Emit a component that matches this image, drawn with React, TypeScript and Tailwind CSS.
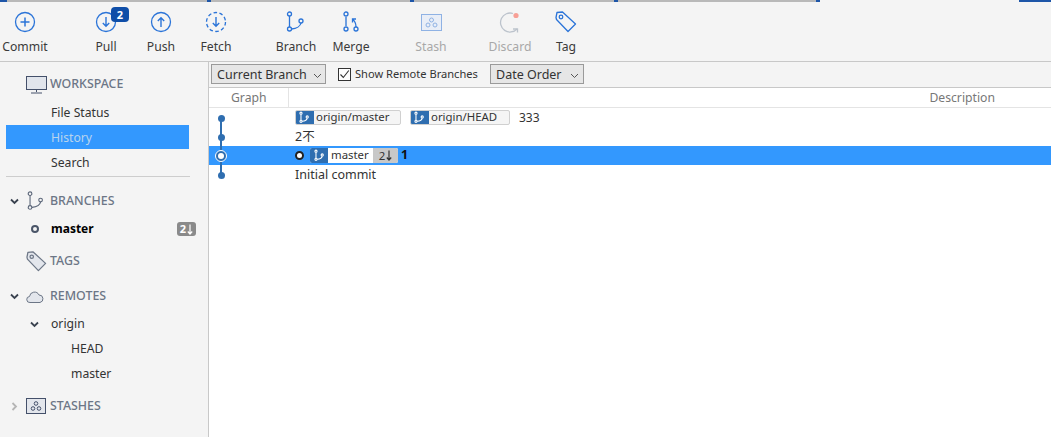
import React from "react";

const BLUE = "#2b74d8";

function CircleIcon({ kind }: { kind: "plus" | "down" | "up" | "fetch" }) {
  return (
    <svg width="22" height="22" viewBox="0 0 22 22" fill="none" stroke={BLUE} strokeWidth="1.3">
      <circle cx="11" cy="11" r="9.5" strokeDasharray={kind === "fetch" ? "3.6 2.4" : undefined} />
      {kind === "plus" && <path d="M11 6.5v9M6.5 11h9" strokeWidth="1.5" />}
      {(kind === "down" || kind === "fetch") && <path d="M11 6v9M7.8 12l3.2 3.2 3.2-3.2" strokeWidth="1.4" />}
      {kind === "up" && <path d="M11 16V7M7.8 10l3.2-3.2 3.2 3.2" strokeWidth="1.4" />}
    </svg>
  );
}

function BranchIcon({ color = BLUE, size = 24, sw = 1.3 }: { color?: string; size?: number; sw?: number }) {
  return (
    <svg width={size} height={size} viewBox="0 0 24 24" fill="none" stroke={color} strokeWidth={sw}>
      <circle cx="5.5" cy="4" r="2" />
      <circle cx="5.5" cy="19" r="2" />
      <circle cx="17" cy="11" r="2" />
      <path d="M5.5 6v11M7.5 19c5-.5 9-3 9.5-6" />
    </svg>
  );
}

function MergeIcon() {
  return (
    <svg width="24" height="24" viewBox="0 0 24 24" fill="none" stroke={BLUE} strokeWidth="1.3">
      <circle cx="7" cy="4" r="2" />
      <circle cx="7" cy="19" r="2" />
      <circle cx="17" cy="19" r="2" />
      <path d="M7 6v11" strokeWidth="2" stroke="#6f9fe0" />
      <path d="M17 17c0-4-1-6-3.5-7.5M13.5 12.5v-3.5h3.5" />
    </svg>
  );
}

function StashIcon() {
  return (
    <svg width="21" height="17" viewBox="0 0 21 17" fill="#e9eef7" stroke="#8fb2e4" strokeWidth="1">
      <rect x="0.5" y="0.5" width="20" height="16" />
      <circle cx="10.5" cy="6" r="2" />
      <circle cx="7" cy="11" r="2" />
      <circle cx="14" cy="11" r="2" />
    </svg>
  );
}

function DiscardIcon() {
  return (
    <svg width="22" height="22" viewBox="0 0 22 22" fill="none">
      <path d="M14 2.5A9.5 9.5 0 1 0 18 18" stroke="#bcc3cc" strokeWidth="1.3" />
      <path d="M14 18h4.5v3.5" stroke="#bcc3cc" strokeWidth="1.3" />
      <circle cx="17" cy="4.5" r="2.6" fill="#f79f95" />
    </svg>
  );
}

function TagIcon({ color = BLUE, fill = "none", size = 22 }: { color?: string; fill?: string; size?: number }) {
  return (
    <svg width={size} height={size} viewBox="0 0 22 22" fill={fill} stroke={color} strokeWidth="1.3">
      <path d="M1 6.5 2 1.5 7.5 1 20.5 13 13 20.5 1.5 8.5Z" strokeLinejoin="round" />
      <circle cx="6" cy="6" r="1.8" fill="none" />
    </svg>
  );
}

function DownArrow({ color }: { color: string }) {
  return (
    <svg width="6" height="11" viewBox="0 0 6 11" fill="none" stroke={color} strokeWidth="1.2">
      <path d="M3 0.5v9.5M0.8 7.5 3 10l2.2-2.5" />
    </svg>
  );
}

function ToolButton({
  label,
  width,
  muted,
  children,
}: {
  label: string;
  width: string;
  muted?: boolean;
  children: React.ReactNode;
}) {
  return (
    <div className={`relative flex flex-col items-center shrink-0 ${width}`}>
      <div className="h-[24px] flex items-center justify-center">{children}</div>
      <span className={`mt-[4px] whitespace-nowrap text-[12.2px] leading-[18px] ${muted ? "text-[#a8a8a8]" : "text-[#3a3a3a]"}`}>{label}</span>
    </div>
  );
}

function Caret() {
  return (
    <svg width="9" height="6" viewBox="0 0 9 6" fill="none" stroke="#555" strokeWidth="1">
      <path d="M1 1l3.5 3.5L8 1" />
    </svg>
  );
}

function Chevron({ right }: { right?: boolean }) {
  return (
    <svg width="9" height="9" viewBox="0 0 9 9" fill="none" stroke={right ? "#b5b5b5" : "#39424f"} strokeWidth="1.8">
      {right ? <path d="M2.5 1l3.5 3.5L2.5 8" /> : <path d="M1 2.5l3.5 3.5L8 2.5" />}
    </svg>
  );
}

function SectionTitle({ children }: { children: React.ReactNode }) {
  return <span className="text-[12.4px] font-medium text-[#6c7686]">{children}</span>;
}

function RefChip({ label, width }: { label: string; width: string }) {
  return (
    <span className={`flex items-stretch h-[15px] rounded-[2px] border border-[#d0d0d0] bg-[#f5f5f5] overflow-hidden ${width}`}>
      <span className="w-[19px] bg-[#2f6eb0] flex items-center justify-center shrink-0 -my-px -ml-px">
        <BranchIcon color="#ffffff" size={13} sw={2} />
      </span>
      <span className="pl-[2px] text-[11.4px] leading-[12px] text-[#333] whitespace-nowrap">{label}</span>
    </span>
  );
}

function GraphDot({ selected, up, down }: { selected?: boolean; up?: boolean; down?: boolean }) {
  return (
    <div className="relative w-[80px] h-[19px] shrink-0">
      {up && <div className="absolute left-[11px] top-0 h-[9px] w-[2px] bg-[#2f6eb0]" />}
      {down && <div className="absolute left-[11px] top-[10px] h-[9px] w-[2px] bg-[#2f6eb0]" />}
      {selected ? (
        <div className="absolute left-[6px] top-[4px] w-[12px] h-[12px] rounded-full border-[1.5px] border-white bg-[#2f6eb0] flex items-center justify-center">
          <div className="w-[6px] h-[6px] rounded-full bg-white" />
        </div>
      ) : (
        <div className="absolute left-[8.5px] top-[6.5px] w-[7px] h-[7px] rounded-full bg-[#2f6eb0]" />
      )}
    </div>
  );
}

export default function App() {
  return (
    <div
      className="w-[1051px] h-[437px] overflow-hidden bg-white flex flex-col text-[#333]"
      style={{ fontFamily: '"Noto Sans", "Noto Sans CJK SC", sans-serif' }}
    >
      <div className="h-[2px] shrink-0 bg-[#f4f4f4] flex">
        <div className="w-[820px] bg-[#b9b9b9] flex">
          <div className="w-[7px] bg-[#1e56a8]" />
          <div className="ml-[200px] w-[4px] bg-[#1e56a8]" />
          <div className="ml-[199px] w-[4px] bg-[#1e56a8]" />
          <div className="ml-[200px] w-[4px] bg-[#1e56a8]" />
          <div className="ml-[198px] w-[4px] bg-[#1e56a8]" />
        </div>
        <div className="ml-[199px] w-[32px] bg-[#1e56a8]" />
      </div>

      <div className="h-[60px] shrink-0 bg-[#f4f4f4] border-b border-[#c8c8c8] flex items-start pt-[8px]">
        <ToolButton label="Commit" width="w-[50px]"><CircleIcon kind="plus" /></ToolButton>
        <ToolButton label="Pull" width="w-[42px] ml-[35px]">
          <CircleIcon kind="down" />
          <span className="absolute left-[26px] -top-[3px] w-[18px] h-[15px] rounded-[4px] bg-[#0f4ea8] text-white text-[11px] leading-[15px] font-bold text-center">2</span>
        </ToolButton>
        <ToolButton label="Push" width="w-[42px] ml-[13px]"><CircleIcon kind="up" /></ToolButton>
        <ToolButton label="Fetch" width="w-[42px] ml-[13px]"><CircleIcon kind="fetch" /></ToolButton>
        <ToolButton label="Branch" width="w-[48px] ml-[35px]"><BranchIcon /></ToolButton>
        <ToolButton label="Merge" width="w-[48px] ml-[7px]"><MergeIcon /></ToolButton>
        <ToolButton label="Stash" width="w-[48px] ml-[32px]" muted><StashIcon /></ToolButton>
        <ToolButton label="Discard" width="w-[48px] ml-[31px]" muted><DiscardIcon /></ToolButton>
        <ToolButton label="Tag" width="w-[40px] ml-[12px]"><TagIcon /></ToolButton>
      </div>

      <div className="flex-1 flex min-h-0">
        <aside className="w-[209px] shrink-0 bg-[#f4f4f4] border-r border-[#c8c8c8] flex flex-col text-[12.2px]">
          <div className="h-[38px] shrink-0 flex items-center pl-[26px] gap-[3px] pt-[7px]">
            <svg width="21" height="18" viewBox="0 0 21 18" fill="#e1e5ec" stroke="#44506a" strokeWidth="1">
              <rect x="0.5" y="0.5" width="20" height="13" />
              <path d="M10.5 14v2M5 17h11" fill="none" />
            </svg>
            <SectionTitle>WORKSPACE</SectionTitle>
          </div>
          <div className="h-[25px] shrink-0 flex items-center pl-[51px] pt-[2px] text-[#333]">File Status</div>
          <div className="h-[24px] shrink-0 ml-[6px] mr-[19px] flex items-center pl-[45px] pt-[2px] bg-[#3398fe] text-[#b8d4ee]">History</div>
          <div className="h-[25px] shrink-0 flex items-center pl-[51px] pt-[3px] text-[#333]">Search</div>
          <div className="mt-[2px] mb-[2px] ml-[6px] mr-[18px] h-px shrink-0 bg-[#cdcdcd]" />
          <div className="h-[43px] shrink-0 flex items-center pl-[10px] pt-[1px]">
            <Chevron />
            <span className="ml-[6px] mr-[3px] flex"><BranchIcon color="#5a6578" size={22} sw={1.2} /></span>
            <SectionTitle>BRANCHES</SectionTitle>
          </div>
          <div className="h-[14px] shrink-0 flex items-center pl-[31px] pr-[12px]">
            <span className="w-[8px] h-[8px] rounded-full border-2 border-[#4a5568]" />
            <span className="ml-[12px] text-[12px] font-bold text-black">master</span>
            <span className="ml-auto w-[19px] h-[14px] rounded-[3px] bg-[#8a8a8a] text-white text-[11px] leading-[14px] font-bold flex items-center justify-center gap-px">
              2<DownArrow color="#ffffff" />
            </span>
          </div>
          <div className="h-[50px] shrink-0 flex items-center pl-[26px]">
            <span className="mr-[3px] flex"><TagIcon color="#6c7686" fill="#e3e6ec" size={21} /></span>
            <SectionTitle>TAGS</SectionTitle>
          </div>
          <div className="h-[21px] shrink-0 flex items-center pl-[10px]">
            <Chevron />
            <svg className="ml-[7px] mr-[6px]" width="18" height="12" viewBox="0 0 18 12" fill="#e3e6ec" stroke="#6c7686" strokeWidth="1">
              <path d="M4 11.5a3 3 0 0 1-.5-6A5 5 0 0 1 13 4a3.8 3.8 0 0 1 1 7.5Z" />
            </svg>
            <SectionTitle>REMOTES</SectionTitle>
          </div>
          <div className="h-[30px] shrink-0 flex items-center pl-[30px] pt-[4px]">
            <Chevron />
            <span className="ml-[12px] text-[#333]">origin</span>
          </div>
          <div className="h-[25px] shrink-0 flex items-center pl-[71px] text-[#333]">HEAD</div>
          <div className="h-[25px] shrink-0 flex items-center pl-[71px] text-[#333]">master</div>
          <div className="h-[36px] shrink-0 flex items-center pl-[10px] pt-[2px]">
            <Chevron right />
            <span className="ml-[7px] mr-[4px] flex">
              <svg width="20" height="16" viewBox="0 0 20 16" fill="#e3e6ec" stroke="#44506a" strokeWidth="1">
                <rect x="0.5" y="0.5" width="19" height="15" />
                <g fill="none">
                  <circle cx="10" cy="5.5" r="1.8" />
                  <circle cx="7" cy="10.5" r="1.8" />
                  <circle cx="13" cy="10.5" r="1.8" />
                </g>
              </svg>
            </span>
            <SectionTitle>STASHES</SectionTitle>
          </div>
        </aside>

        <main className="flex-1 min-w-0 flex flex-col">
          <div className="h-[26px] shrink-0 bg-[#f4f4f4] border-b border-[#c8c8c8] flex items-center pl-[2px] pb-[1px]">
            <div className="w-[115px] h-[20px] border border-[#9a9a9a] bg-[#e6e6e6] flex items-center pl-[5px] pt-[3px] text-[12.5px] text-[#333] gap-[6px]">
              Current Branch <Caret />
            </div>
            <div className="ml-[12px] w-[13px] h-[13px] border border-[#333] bg-white flex items-center justify-center">
              <svg width="11" height="11" viewBox="0 0 11 11" fill="none" stroke="#333" strokeWidth="1.1"><path d="M1.5 5.5 4.3 8.5 9.8 1.5" /></svg>
            </div>
            <span className="ml-[4px] w-[123px] whitespace-nowrap text-[11.1px] text-[#333]">Show Remote Branches</span>
            <div className="ml-[12px] w-[94px] h-[20px] border border-[#9a9a9a] bg-[#e6e6e6] flex items-center pl-[5px] pt-[3px] text-[12.5px] text-[#333] gap-[8px]">
              Date Order <Caret />
            </div>
          </div>

          <div className="h-[20px] shrink-0 flex border-b border-[#e4e4e4] text-[12.2px] text-[#777]">
            <div className="w-[80px] border-r border-[#e4e4e4] pl-[22px] leading-[19px]">Graph</div>
            <div className="flex-1 text-right pr-[56px] leading-[19px]">Description</div>
          </div>

          <div className="flex flex-col text-[12.5px] text-[#333]">
            <div className="h-[19px] flex items-center">
              <GraphDot down />
              <div className="pl-[6px] flex items-center">
                <RefChip label="origin/master" width="w-[106px]" />
                <span className="ml-[9px] flex"><RefChip label="origin/HEAD" width="w-[100px]" /></span>
                <span className="ml-[9px] text-[12px]">333</span>
              </div>
            </div>
            <div className="h-[19px] flex items-center">
              <GraphDot up down />
              <span className="pl-[6px] pt-[2px]">2不</span>
            </div>
            <div className="h-[19px] flex items-center bg-[#3398fe]">
              <GraphDot selected up down />
              <div className="pl-[6px] flex items-center">
                <span className="w-[9px] h-[9px] rounded-full border-[2.5px] border-[#222] bg-white" />
                <span className="ml-[6px] flex items-stretch h-[15px] rounded-[2px] overflow-hidden bg-white">
                  <span className="w-[18px] bg-[#2f6eb0] flex items-center justify-center">
                    <BranchIcon color="#ffffff" size={13} sw={2} />
                  </span>
                  <span className="w-[45px] pl-[3px] text-[11.4px] leading-[14px] text-[#333]">master</span>
                  <span className="w-[25px] bg-[#c8c8c8] text-[11.4px] leading-[14px] text-[#333] flex items-center justify-center gap-px">
                    2<DownArrow color="#333333" />
                  </span>
                </span>
                <span className="ml-[3px] font-bold text-[#111]">1</span>
              </div>
            </div>
            <div className="h-[19px] flex items-center">
              <GraphDot up />
              <span className="pl-[6px] pt-[2px]">Initial commit</span>
            </div>
          </div>
        </main>
      </div>
    </div>
  );
}
